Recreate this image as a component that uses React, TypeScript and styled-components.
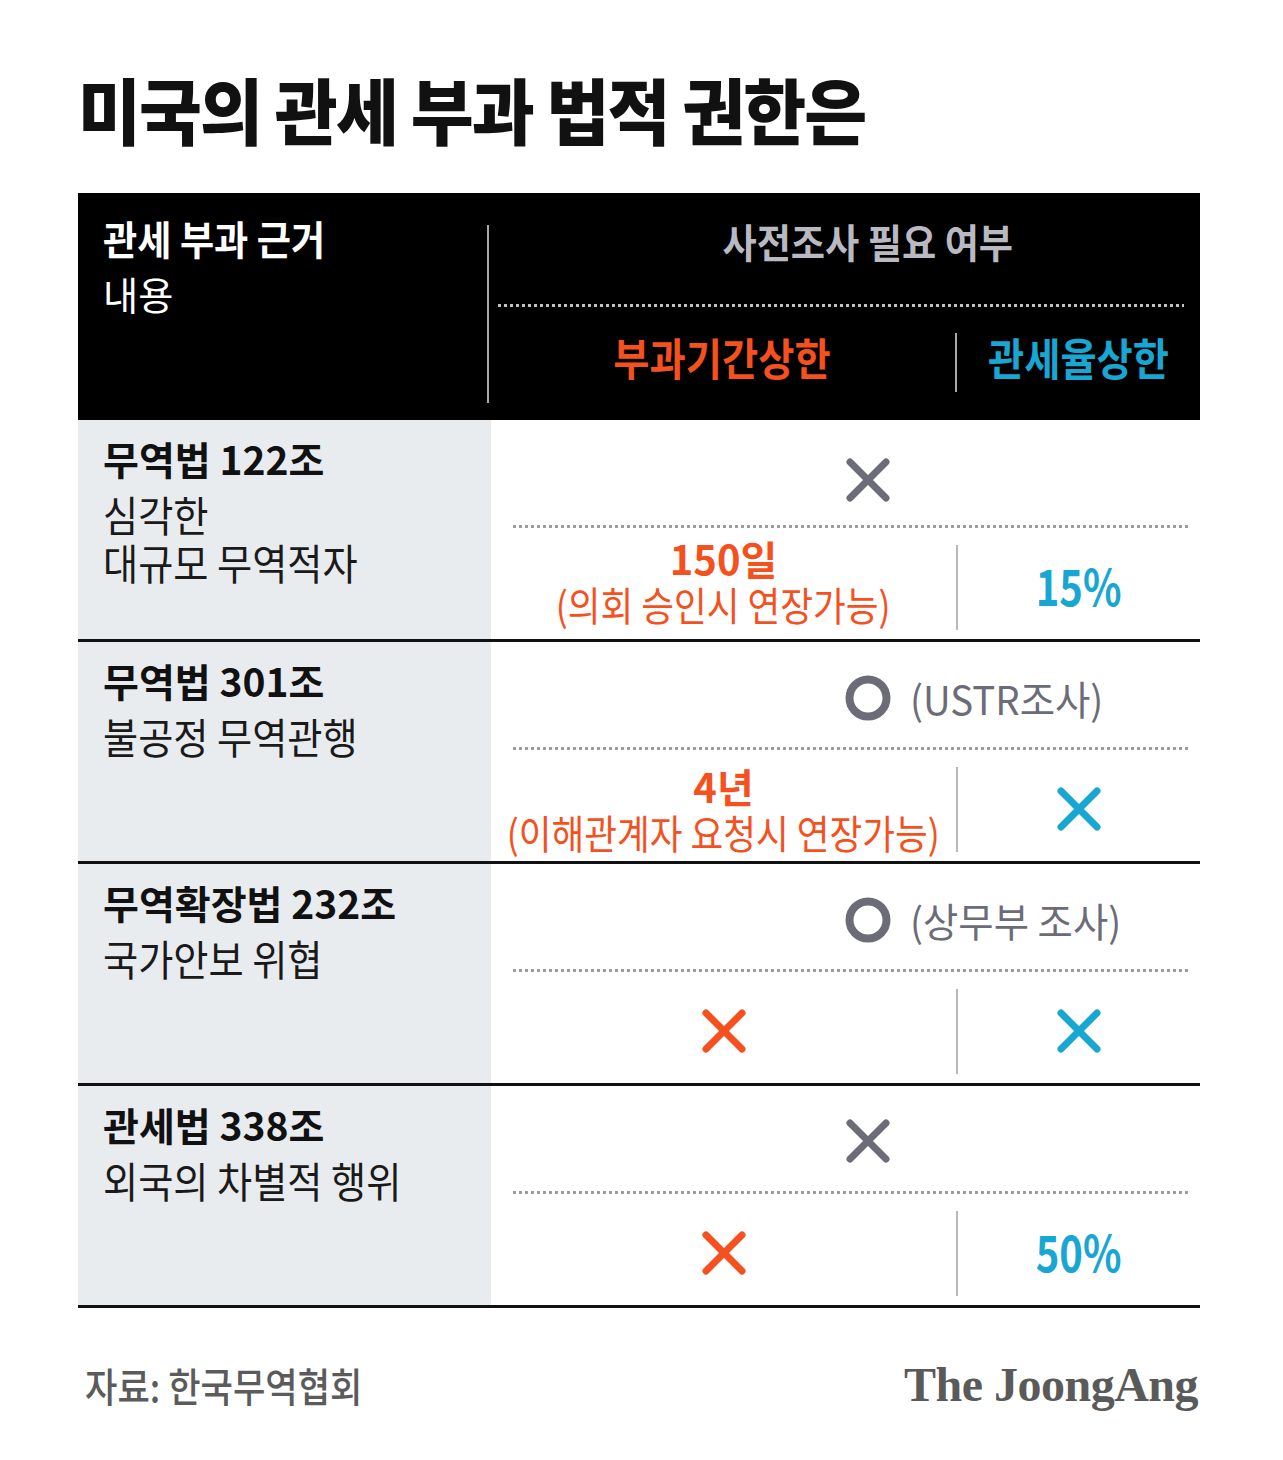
import React from "react";
import styled, { createGlobalStyle, css } from "styled-components";

const KR = `"Noto Sans CJK KR", "Noto Sans", sans-serif`;

const ORANGE = "#f4511f";
const BLUE = "#18a6d3";
const GRAY = "#6c6c78";

const Global = createGlobalStyle`
  html, body { margin: 0; padding: 0; background: #fff; }
  body { font-family: ${KR}; width: 1283px; min-height: 1460px; }
  * { box-sizing: border-box; }
`;

const squeeze = (sx: number, origin: string) => css`
  transform: scaleX(${sx});
  transform-origin: ${origin};
  white-space: nowrap;
`;

const Page = styled.div`
  width: 1283px;
  padding: 72px 83px 40px 78px;
`;

const Title = styled.h1`
  margin: 0;
  font-size: 72px;
  font-weight: 900;
  line-height: 1;
  letter-spacing: -2px;
  color: #111;
  ${squeeze(0.95, "left center")}
`;

const Header = styled.div`
  margin-top: 49px;
  display: grid;
  grid-template-columns: 409px 2px 1fr;
  height: 227px;
  background: #000;
`;

const HeadLeft = styled.div`
  padding: 25px 0 0 25px;
  display: flex;
  flex-direction: column;
  gap: 16px;
`;

const HeadTitle = styled.div`
  font-size: 40px;
  font-weight: 700;
  line-height: 1;
  color: #fff;
  ${squeeze(0.93, "left center")}
`;

const HeadSub = styled.div`
  font-size: 39px;
  font-weight: 400;
  line-height: 1;
  color: #fff;
  ${squeeze(0.98, "left center")}
`;

const VLine = styled.div`
  width: 2px;
  background: #a8a8a8;
  margin: 32px 0 17px;
`;

const HeadRight = styled.div`
  padding-top: 28px;
  display: flex;
  flex-direction: column;
`;

const HeadRightTitle = styled.div`
  padding-left: 50px;
  text-align: center;
  font-size: 40px;
  font-weight: 700;
  line-height: 1;
  color: #b9b9c1;
  ${squeeze(0.93, "center")}
`;

const Dotted = styled.div<{ $color: string }>`
  height: 3px;
  background-image: radial-gradient(circle at 1.5px 1.5px, ${(p) => p.$color} 1.4px, transparent 1.8px);
  background-size: 6px 3px;
  background-repeat: repeat-x;
`;

const HeadDotted = styled(Dotted)`
  margin: 43px 16px 0 9px;
`;

const SubRow = styled.div`
  margin-top: 28px;
  display: flex;
  align-items: flex-start;
`;

const SubCell = styled.div<{ $color: string; $width?: number }>`
  ${(p) => (p.$width ? `width: ${p.$width}px;` : "flex: 1;")}
  text-align: center;
  font-size: 44px;
  font-weight: 700;
  line-height: 1;
  color: ${(p) => p.$color};
  ${squeeze(0.895, "center")}
`;

const SubSep = styled.div`
  width: 2px;
  height: 59px;
  margin-top: -2px;
  background: #a8a8a8;
`;

const Row = styled.div`
  display: grid;
  grid-template-columns: 413px 1fr;
  height: 222px;
  border-bottom: 3px solid #111;
`;

const LeftCell = styled.div`
  background: #e9ecef;
  padding: 19px 0 0 25px;
`;

const RowTitle = styled.div`
  font-size: 39px;
  font-weight: 700;
  line-height: 1;
  color: #111;
  white-space: nowrap;
`;

const RowDesc = styled.div`
  margin-top: 12px;
  font-size: 42px;
  font-weight: 400;
  line-height: 48px;
  color: #1a1a1a;
  ${squeeze(0.91, "left center")}
`;

const RightCell = styled.div`
  display: flex;
  flex-direction: column;
`;

const Upper = styled.div<{ $nudge: number }>`
  height: 105px;
  padding: ${(p) => 6 + p.$nudge}px 0 0 45px;
  display: grid;
  grid-template-columns: 1fr auto 1fr;
  align-items: center;
`;

const UpperIcon = styled.div`
  grid-column: 2;
  display: flex;
`;

const UpperLabel = styled.div`
  grid-column: 3;
  justify-self: start;
  margin-left: 19px;
  font-size: 40px;
  font-weight: 400;
  line-height: 1;
  color: ${GRAY};
  ${squeeze(0.96, "left center")}
`;

const RowDotted = styled(Dotted)`
  margin: 0 12px 0 22px;
`;

const Lower = styled.div`
  flex: 1;
  display: flex;
`;

const LowerLeft = styled.div`
  width: 465px;
  padding-top: 6px;
  display: flex;
  flex-direction: column;
  align-items: center;
  justify-content: center;
`;

const LowerSep = styled.div`
  width: 2px;
  background: #b8b8b8;
  margin: 17px 0 9px;
`;

const LowerRight = styled.div`
  flex: 1;
  padding-top: 6px;
  display: flex;
  align-items: center;
  justify-content: center;
`;

const PeriodBlock = styled.div<{ $nudge?: number }>`
  margin-top: ${(p) => p.$nudge ?? 0}px;
  display: flex;
  flex-direction: column;
  align-items: center;
  gap: 6px;
`;

const Period = styled.div`
  font-size: 40px;
  font-weight: 700;
  line-height: 1;
  color: ${ORANGE};
  text-align: center;
  white-space: nowrap;
`;

const PeriodNote = styled.div`
  font-size: 40px;
  font-weight: 400;
  line-height: 1;
  color: ${ORANGE};
  text-align: center;
  ${squeeze(0.89, "center")}
`;

const Rate = styled.div`
  margin-top: -6px;
  font-size: 50px;
  font-weight: 700;
  line-height: 1;
  color: ${BLUE};
  ${squeeze(0.8, "center")}
`;

const Footer = styled.div`
  margin-top: 53px;
  display: flex;
  justify-content: space-between;
  align-items: center;
  padding: 0 2px 0 7px;
`;

const Source = styled.div`
  font-size: 40px;
  font-weight: 500;
  line-height: 1;
  color: #5b5b5b;
  ${squeeze(0.88, "left center")}
`;

const Logo = styled.div`
  font-family: "Liberation Serif", "Times New Roman", serif;
  font-size: 48px;
  font-weight: 700;
  line-height: 1;
  letter-spacing: -0.5px;
  color: #5a5a5a;
  white-space: nowrap;
`;

const XMark = ({ color }: { color: string }) => (
  <svg width="46" height="46" viewBox="0 0 46 46">
    <path d="M5 5 L41 41 M41 5 L5 41" stroke={color} strokeWidth="7" strokeLinecap="round" fill="none" />
  </svg>
);

const OMark = () => (
  <svg width="46" height="46" viewBox="0 0 46 46">
    <circle cx="23" cy="23" r="18.5" stroke={GRAY} strokeWidth="8" fill="none" />
  </svg>
);

interface RowData {
  title: string;
  desc: string[];
  upper: "x" | "o";
  upperNudge: number;
  upperLabel?: string;
  lowerLeft: React.ReactNode;
  lowerRight: React.ReactNode;
}

const rows: RowData[] = [
  {
    title: "무역법 122조",
    desc: ["심각한", "대규모 무역적자"],
    upper: "x",
    upperNudge: 8,
    lowerLeft: (
      <PeriodBlock $nudge={-12}>
        <Period>150일</Period>
        <PeriodNote>(의회 승인시 연장가능)</PeriodNote>
      </PeriodBlock>
    ),
    lowerRight: <Rate>15%</Rate>,
  },
  {
    title: "무역법 301조",
    desc: ["불공정 무역관행"],
    upper: "o",
    upperNudge: 0,
    upperLabel: "(USTR조사)",
    lowerLeft: (
      <PeriodBlock>
        <Period>4년</Period>
        <PeriodNote>(이해관계자 요청시 연장가능)</PeriodNote>
      </PeriodBlock>
    ),
    lowerRight: <XMark color={BLUE} />,
  },
  {
    title: "무역확장법 232조",
    desc: ["국가안보 위협"],
    upper: "o",
    upperNudge: 0,
    upperLabel: "(상무부 조사)",
    lowerLeft: <XMark color={ORANGE} />,
    lowerRight: <XMark color={BLUE} />,
  },
  {
    title: "관세법 338조",
    desc: ["외국의 차별적 행위"],
    upper: "x",
    upperNudge: -2,
    lowerLeft: <XMark color={ORANGE} />,
    lowerRight: <Rate>50%</Rate>,
  },
];

export default function App() {
  return (
    <>
      <Global />
      <Page>
        <Title>미국의 관세 부과 법적 권한은</Title>
        <Header>
          <HeadLeft>
            <HeadTitle>관세 부과 근거</HeadTitle>
            <HeadSub>내용</HeadSub>
          </HeadLeft>
          <VLine />
          <HeadRight>
            <HeadRightTitle>사전조사 필요 여부</HeadRightTitle>
            <HeadDotted $color="#c4c4c4" />
            <SubRow>
              <SubCell $color={ORANGE} $width={466}>부과기간상한</SubCell>
              <SubSep />
              <SubCell $color={BLUE}>관세율상한</SubCell>
            </SubRow>
          </HeadRight>
        </Header>
        {rows.map((r) => (
          <Row key={r.title}>
            <LeftCell>
              <RowTitle>{r.title}</RowTitle>
              <RowDesc>
                {r.desc.map((d) => (
                  <div key={d}>{d}</div>
                ))}
              </RowDesc>
            </LeftCell>
            <RightCell>
              <Upper $nudge={r.upperNudge}>
                <UpperIcon>{r.upper === "x" ? <XMark color={GRAY} /> : <OMark />}</UpperIcon>
                {r.upperLabel && <UpperLabel>{r.upperLabel}</UpperLabel>}
              </Upper>
              <RowDotted $color="#9b9b9b" />
              <Lower>
                <LowerLeft>{r.lowerLeft}</LowerLeft>
                <LowerSep />
                <LowerRight>{r.lowerRight}</LowerRight>
              </Lower>
            </RightCell>
          </Row>
        ))}
        <Footer>
          <Source>자료: 한국무역협회</Source>
          <Logo>The JoongAng</Logo>
        </Footer>
      </Page>
    </>
  );
}
